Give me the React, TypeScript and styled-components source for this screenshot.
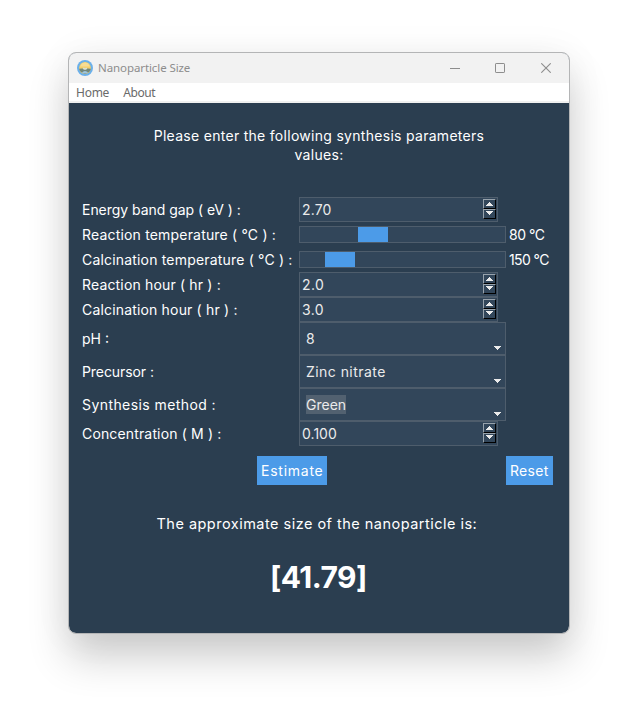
import React from 'react';
import styled, { createGlobalStyle } from 'styled-components';

const GlobalStyle = createGlobalStyle`
  * { box-sizing: border-box; }
  body { margin: 0; background: #fff; }
  button { border: 0; padding: 0; background: none; font: inherit; color: inherit; }
`;

const Desktop = styled.div`
  width: 634px;
  height: 710px;
  padding: 52px 64px 0 68px;
  overflow: hidden;
`;

const Window = styled.main`
  width: 502px;
  height: 582px;
  display: flex;
  flex-direction: column;
  overflow: hidden;
  border: 1px solid #b4b5b6;
  border-radius: 8px;
  background: #2b3e50;
  background-clip: padding-box;
  color: #fff;
  font: 14px/19px Inter, sans-serif;
  box-shadow: 0 24px 40px rgba(0, 0, 0, 0.19), 0 2px 40px rgba(0, 0, 0, 0.05);
`;

const TitleBar = styled.header`
  flex: none;
  height: 30px;
  display: flex;
  align-items: center;
  padding-left: 8px;
  background: #f2f2f2;
  color: #8d8d8d;
`;

const Title = styled.span`
  flex: 1;
  margin-left: 5px;
  font: 11.5px/16px "Noto Sans", sans-serif;
  letter-spacing: -0.09px;
`;

const WindowButton = styled.button`
  width: 46px;
  height: 30px;
  display: flex;
  align-items: center;
  justify-content: center;
`;

const CaptionButtons = styled.div`
  display: flex;

  ${WindowButton}:first-child {
    width: 44px;
  }
`;

const MenuBar = styled.nav`
  flex: none;
  height: 20px;
  display: flex;
  gap: 14px;
  padding: 1px 0 0 7px;
  border-bottom: 2px solid #f0f0f0;
  background: #fff;
  color: #6a6a6a;
  font: 12px/18px "Noto Sans", sans-serif;
`;

const MenuItem = styled.span<{ $spacing: number }>`
  letter-spacing: ${(p) => p.$spacing}px;
`;

const Prompt = styled.p`
  width: 340px;
  margin: 23px auto 33px 80px;
  text-align: center;
  letter-spacing: 0.29px;
`;

const Form = styled.section`
  display: grid;
  grid-template-columns: 217px 207px 1fr;
  grid-template-rows: repeat(5, 25px) repeat(3, 33px) 25px;
  align-items: center;
  padding-left: 13px;
`;

const Label = styled.label<{ $spacing: number }>`
  grid-column: 1;
  white-space: nowrap;
  letter-spacing: ${(p) => p.$spacing}px;
`;

const Field = styled.div`
  grid-column: 2;
  display: flex;
  border: 1px solid #4e5d6c;
  background: #32465a;
  color: #ebebeb;
`;

const SpinField = styled(Field)`
  width: 199px;
  height: 25px;
  align-items: center;
  justify-content: space-between;
  padding: 0 1px 0 2px;
`;

const ComboField = styled(Field)`
  height: 33px;
  align-items: center;
  justify-content: space-between;
  padding: 0 4px 0 6px;
`;

const Track = styled(Field)`
  height: 17px;
`;

const Thumb = styled.div<{ $offset: number }>`
  width: 30px;
  height: 15px;
  margin-left: ${(p) => p.$offset}px;
  background: #4c9be8;
`;

const Value = styled.span<{ $spacing: number; $selected?: boolean }>`
  line-height: 19px;
  letter-spacing: ${(p) => p.$spacing}px;
  background: ${(p) => (p.$selected ? '#526170' : 'transparent')};
`;

const Reading = styled.output<{ $spacing: number }>`
  padding-left: 3px;
  letter-spacing: ${(p) => p.$spacing}px;
`;

const Steppers = styled.div`
  display: flex;
  flex-direction: column;
  margin-top: -1px;
`;

const Stepper = styled.button`
  width: 13px;
  height: 10px;
  display: flex;
  align-items: flex-start;
  justify-content: center;
  padding-top: 2px;
  border: 1px solid;
  border-color: #97a2ac #000 #000 #97a2ac;
  background: #32465a;

  & + & {
    padding-top: 1px;
  }
`;

const ComboArrow = styled.svg`
  margin-top: 19px;
`;

const Actions = styled.div`
  display: flex;
  justify-content: space-between;
  margin: 10px 16px 0 188px;
`;

const ActionButton = styled.button<{ $width: number; $spacing: number }>`
  && {
    width: ${(p) => p.$width}px;
    height: 29px;
    padding: 0 0 1px 4px;
    background: #4c9be8;
    text-align: left;
    letter-spacing: ${(p) => p.$spacing}px;
  }
`;

const ResultCaption = styled.p`
  margin: 29px 0 0 87.5px;
  font-size: 14.5px;
  line-height: 20px;
  letter-spacing: 0.48px;
`;

const Result = styled.strong`
  margin: 23px 0 0 201px;
  font-size: 30px;
  line-height: 40px;
  letter-spacing: -0.55px;
`;

const AppIcon = () => (
  <svg width="16" height="16" viewBox="0 0 16 16">
    <circle cx="8" cy="8" r="8" fill="#6bb0ea" />
    <circle cx="8" cy="8" r="5.9" fill="#f5cf6a" />
    <path d="M3 6.5 5 3.2 8 2.4 11 3.2 13 6.5" fill="#f8dd94" />
    <path d="M2.1 8.8Q8 7.6 13.9 8.8 13.2 12.7 8 13.9 2.8 12.7 2.1 8.8Z" fill="#71877c" />
    <path d="M5.6 9 6.5 7.4 8 8 9.5 7.4 10.4 9 8 10Z" fill="#d9dfd0" />
    <path d="M4.8 12.5Q8 9.5 11.2 12.5 8 14.6 4.8 12.5Z" fill="#9fc6df" />
  </svg>
);

const UpArrow = () => (
  <svg width="7" height="4" viewBox="0 0 7 4" shapeRendering="crispEdges">
    <path d="M3 0h1v1h1v1h1v1h1v1H0V3h1V2h1V1h1Z" fill="#ebebeb" />
  </svg>
);

const downShape = 'M0 0h7v1H6v1H5v1H4v1H3V3H2V2H1V1H0Z';

const DownArrow = () => (
  <svg width="7" height="4" viewBox="0 0 7 4" shapeRendering="crispEdges">
    <path d={downShape} fill="#ebebeb" />
  </svg>
);

type TextProps = { label: string; labelSpacing: number; spacing: number };

const SpinRow = ({ label, labelSpacing, value, spacing }: TextProps & { value: string }) => (
  <>
    <Label $spacing={labelSpacing}>{label}</Label>
    <SpinField>
      <Value $spacing={spacing}>{value}</Value>
      <Steppers>
        <Stepper aria-label="Increase"><UpArrow /></Stepper>
        <Stepper aria-label="Decrease"><DownArrow /></Stepper>
      </Steppers>
    </SpinField>
  </>
);

const ScaleRow = ({ label, labelSpacing, reading, spacing, offset }: TextProps & { reading: string; offset: number }) => (
  <>
    <Label $spacing={labelSpacing}>{label}</Label>
    <Track><Thumb $offset={offset} /></Track>
    <Reading $spacing={spacing}>{reading}</Reading>
  </>
);

const ComboRow = ({ label, labelSpacing, value, spacing, selected }: TextProps & { value: string; selected?: boolean }) => (
  <>
    <Label $spacing={labelSpacing}>{label}</Label>
    <ComboField>
      <Value $spacing={spacing} $selected={selected}>{value}</Value>
      <ComboArrow width="7" height="4" viewBox="0 0 7 4" shapeRendering="crispEdges">
        <path d={downShape} fill="#ebebeb" />
      </ComboArrow>
    </ComboField>
  </>
);

export default function App() {
  return (
    <>
      <GlobalStyle />
      <Desktop>
        <Window>
          <TitleBar>
            <AppIcon />
            <Title>Nanoparticle Size</Title>
            <CaptionButtons>
              <WindowButton aria-label="Minimize">
                <svg width="10" height="10"><path d="M0 5.5h10" stroke="#8d8d8d" /></svg>
              </WindowButton>
              <WindowButton aria-label="Maximize">
                <svg width="10" height="10"><rect x=".5" y=".5" width="9" height="9" rx=".6" fill="none" stroke="#8d8d8d" /></svg>
              </WindowButton>
              <WindowButton aria-label="Close">
                <svg width="10" height="10"><path d="m.3.3 9.4 9.4m0-9.4L.3 9.7" stroke="#8d8d8d" strokeWidth="1.1" /></svg>
              </WindowButton>
            </CaptionButtons>
          </TitleBar>
          <MenuBar>
            <MenuItem $spacing={-0.25}>Home</MenuItem>
            <MenuItem $spacing={-0.4}>About</MenuItem>
          </MenuBar>
          <Prompt>Please enter the following synthesis parameters values:</Prompt>
          <Form>
            <SpinRow label="Energy band gap ( eV ) :" labelSpacing={-0.04} value="2.70" spacing={0.14} />
            <ScaleRow label="Reaction temperature ( °C ) :" labelSpacing={0.18} offset={58} reading="80 °C" spacing={-0.45} />
            <ScaleRow label="Calcination temperature ( °C ) :" labelSpacing={0.18} offset={25} reading="150 °C" spacing={-0.6} />
            <SpinRow label="Reaction hour ( hr ) :" labelSpacing={0.16} value="2.0" spacing={0.4} />
            <SpinRow label="Calcination hour ( hr ) :" labelSpacing={0.17} value="3.0" spacing={0.4} />
            <ComboRow label="pH :" labelSpacing={0} value="8" spacing={0} />
            <ComboRow label="Precursor :" labelSpacing={-0.08} value="Zinc nitrate" spacing={0.45} />
            <ComboRow label="Synthesis method :" labelSpacing={0.42} value="Green" spacing={0} selected />
            <SpinRow label="Concentration ( M ) :" labelSpacing={0.15} value="0.100" spacing={0.04} />
          </Form>
          <Actions>
            <ActionButton $width={70} $spacing={0.75}>Estimate</ActionButton>
            <ActionButton $width={47} $spacing={0.3}>Reset</ActionButton>
          </Actions>
          <ResultCaption>The approximate size of the nanoparticle is:</ResultCaption>
          <Result>[41.79]</Result>
        </Window>
      </Desktop>
    </>
  );
}
